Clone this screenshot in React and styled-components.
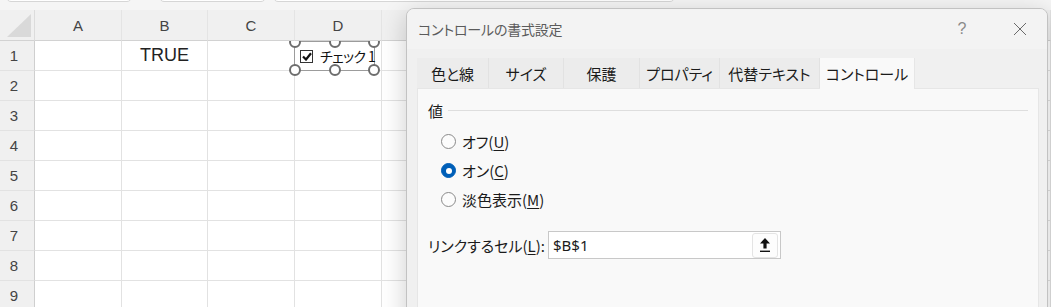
import React from "react";
import styled, { createGlobalStyle } from "styled-components";

const GlobalStyle = createGlobalStyle`
  html, body {
    margin: 0;
    padding: 0;
    background: #fff;
    overflow: hidden;
  }
  body {
    font-family: "Noto Sans", "Noto Sans CJK JP", sans-serif;
  }
`;

const Screen = styled.div`
  position: relative;
  width: 1051px;
  height: 307px;
  overflow: hidden;
  background: #fff;
`;

const TopStrip = styled.div`
  height: 10px;
  background: #f5f5f5;
  display: flex;
  align-items: flex-end;
  overflow: hidden;
`;

const StripBox = styled.div`
  width: ${(p) => p.$w}px;
  margin-left: ${(p) => p.$ml}px;
  height: 14px;
  margin-bottom: 8px;
  flex-shrink: 0;
  background: #fff;
  border: 1px solid #d6d6d6;
  border-radius: 5px;
`;

const Sheet = styled.div`
  display: grid;
  grid-template-columns: 35px 87px 86px 87px 87px 1fr;
  grid-template-rows: 31px repeat(9, 30px);
  font-family: "Liberation Sans", "Noto Sans", sans-serif;
`;

const Corner = styled.div`
  position: relative;
  z-index: 2;
  background: #f0f0f0;
  border-right: 1px solid #dcdcdc;
  border-bottom: 1px solid #d2d2d2;

  &::after {
    content: "";
    position: absolute;
    right: 3px;
    bottom: 3px;
    border-style: solid;
    border-width: 0 0 23px 24px;
    border-color: transparent transparent #d9d9d9 transparent;
  }
`;

const ColHead = styled.div`
  position: relative;
  z-index: 2;
  display: flex;
  align-items: center;
  justify-content: center;
  background: #f0f0f0;
  border-right: 1px solid #e4e4e4;
  border-bottom: 1px solid #d2d2d2;
  color: #444;
  font-size: 15px;
`;

const RowHead = styled.div`
  display: flex;
  align-items: center;
  justify-content: center;
  padding-right: 6px;
  background: #f0f0f0;
  border-right: 1px solid #cfcfcf;
  border-bottom: 1px solid #e2e2e2;
  color: #444;
  font-size: 15px;
`;

const Cell = styled.div`
  position: relative;
  display: flex;
  align-items: center;
  justify-content: center;
  border-right: 1px solid #e2e2e2;
  border-bottom: 1px solid #e2e2e2;
  color: #222;
  font-size: 18px;
`;

const FormControl = styled.div`
  position: absolute;
  left: -1px;
  top: 0;
  width: 81px;
  height: 30px;
  box-sizing: border-box;
  z-index: 1;
  display: flex;
  align-items: center;
  gap: 7px;
  padding-left: 5px;
  border: 1px solid #9c9c9c;
  background: #fff;
  font-family: "Noto Sans CJK JP", sans-serif;
  font-feature-settings: "palt";
  font-size: 14px;
  letter-spacing: -0.6px;
  color: #111;
  white-space: nowrap;
`;

const MiniCheck = styled.span`
  width: 13px;
  height: 13px;
  box-sizing: border-box;
  border: 1px solid #333;
  background: #fff;
  display: flex;
  align-items: center;
  justify-content: center;
  flex-shrink: 0;
`;

const Handle = styled.span`
  position: absolute;
  left: ${(p) => p.$x};
  top: ${(p) => p.$y};
  width: 12px;
  height: 12px;
  box-sizing: border-box;
  border: 2px solid #6d6d6d;
  border-radius: 50%;
  background: #fff;
  transform: translate(-50%, -50%);
`;

const Dialog = styled.div`
  position: absolute;
  left: 406px;
  top: 8px;
  width: 642px;
  height: 330px;
  box-sizing: border-box;
  z-index: 5;
  border: 1px solid #c2c2c2;
  border-radius: 8px 8px 0 0;
  background: #f0f0f0;
  box-shadow: 0 6px 26px rgba(0, 0, 0, 0.2);
  font-family: "Noto Sans CJK JP", sans-serif;
  font-feature-settings: "palt";
  overflow: hidden;
`;

const TitleBar = styled.div`
  height: 40px;
  display: flex;
  align-items: center;
  gap: 12px;
  padding: 0 4px 0 11px;
  background: #f3f3f3;
`;

const Title = styled.div`
  flex: 1;
  font-size: 14px;
  color: #5b5b5b;
  letter-spacing: -0.2px;
`;

const TitleButton = styled.div`
  width: 46px;
  height: 32px;
  display: flex;
  align-items: center;
  justify-content: center;
  color: #8a8a8a;
  font-family: "Liberation Sans", sans-serif;
  font-size: 16px;
`;

const Body = styled.div`
  padding: 9px 8px 0 10px;
`;

const Tabs = styled.div`
  display: flex;
  position: relative;
  z-index: 1;
`;

const Tab = styled.div`
  width: ${(p) => p.$w}px;
  box-sizing: border-box;
  display: flex;
  align-items: center;
  justify-content: center;
  font-size: 15px;
  color: #1b1b1b;
  background: ${(p) => (p.$active ? "#f9f9f9" : "#ececec")};
  border-right: 1px solid ${(p) => (p.$active ? "#e6e6e6" : "#e2e2e2")};
  margin-bottom: ${(p) => (p.$active ? "-1px" : "0")};
  height: ${(p) => (p.$active ? "31px" : "30px")};
`;

const Panel = styled.div`
  height: 260px;
  box-sizing: border-box;
  padding: 11px 10px 0 10px;
  background: #f9f9f9;
  border: 1px solid #e6e6e6;
`;

const GroupHead = styled.div`
  height: 20px;
  display: flex;
  align-items: center;
  font-size: 15px;
  color: #1b1b1b;
`;

const GroupLine = styled.div`
  flex: 1;
  height: 1px;
  margin-left: 5px;
  background: #dedede;
`;

const RadioList = styled.div`
  margin-top: 7px;
  padding-left: 13px;
`;

const RadioRow = styled.div`
  height: 29px;
  display: flex;
  align-items: center;
  gap: 6px;
  font-size: 15px;
  color: #1b1b1b;
`;

const RadioDot = styled.span`
  width: 15px;
  height: 15px;
  box-sizing: border-box;
  border-radius: 50%;
  border: 1px solid ${(p) => (p.$on ? "#005fb8" : "#8a8a8a")};
  background: ${(p) => (p.$on ? "#005fb8" : "#fcfcfc")};
  display: flex;
  align-items: center;
  justify-content: center;

  &::after {
    content: "";
    display: ${(p) => (p.$on ? "block" : "none")};
    width: 6px;
    height: 6px;
    border-radius: 50%;
    background: #fff;
  }
`;

const LinkRow = styled.div`
  margin-top: 17px;
  display: flex;
  align-items: center;
`;

const LinkLabel = styled.div`
  width: 120px;
  font-size: 15px;
  color: #1b1b1b;
`;

const RefInput = styled.div`
  width: 233px;
  height: 28px;
  box-sizing: border-box;
  display: flex;
  align-items: center;
  padding: 1px 2px 1px 4px;
  background: #fff;
  border: 1px solid #c8c8c8;
`;

const RefText = styled.div`
  flex: 1;
  font-family: "Noto Sans", sans-serif;
  font-size: 15px;
  color: #1b1b1b;
`;

const RefButton = styled.div`
  width: 26px;
  height: 25px;
  box-sizing: border-box;
  display: flex;
  align-items: center;
  justify-content: center;
  background: #fdfdfd;
  border: 1px solid #e4e4e4;
  border-radius: 3px;
`;

const Key = styled.u`
  text-underline-offset: 2px;
`;

const columns = ["A", "B", "C", "D", ""];
const tabs = [
  { label: "色と線", w: 72 },
  { label: "サイズ", w: 75 },
  { label: "保護", w: 76 },
  { label: "プロパティ", w: 80 },
  { label: "代替テキスト", w: 100 },
  { label: "コントロール", w: 95, active: true },
];

const CheckMark = () => (
  <svg width="10" height="9" viewBox="0 0 10 9">
    <path d="M1 4.5 L4 7.5 L9 1.2" fill="none" stroke="#111" strokeWidth="2.2" />
  </svg>
);

const UpArrow = () => (
  <svg width="12" height="16" viewBox="0 0 12 16">
    <path d="M6 1 L11 6.5 H7.6 V11.5 H4.4 V6.5 H1 Z" fill="#111" />
    <rect x="1" y="13.6" width="10" height="1.4" fill="#111" />
  </svg>
);

const CloseIcon = () => (
  <svg width="14" height="14" viewBox="0 0 14 14">
    <path d="M1 1 L13 13 M13 1 L1 13" stroke="#6a6a6a" strokeWidth="1" />
  </svg>
);

const renderCell = (row, col) => {
  if (row === 1 && col === 1) return "TRUE";
  if (row === 1 && col === 3) {
    return (
      <FormControl>
        <MiniCheck>
          <CheckMark />
        </MiniCheck>
        <span>チェック&nbsp;1</span>
        <Handle $x="0%" $y="0%" />
        <Handle $x="50%" $y="0%" />
        <Handle $x="100%" $y="0%" />
        <Handle $x="0%" $y="100%" />
        <Handle $x="50%" $y="100%" />
        <Handle $x="100%" $y="100%" />
      </FormControl>
    );
  }
  return null;
};

const App = () => {
  const rows = [1, 2, 3, 4, 5, 6, 7, 8, 9];

  return (
    <Screen>
      <GlobalStyle />
      <TopStrip>
        <StripBox $ml={6} $w={124} />
        <StripBox $ml={27} $w={105} />
        <StripBox $ml={7} $w={400} />
      </TopStrip>

      <Sheet>
        <Corner />
        {columns.map((c, i) => (
          <ColHead key={i}>{c}</ColHead>
        ))}
        {rows.map((r) => (
          <React.Fragment key={r}>
            <RowHead>{r}</RowHead>
            {columns.map((c, i) => (
              <Cell key={i}>{renderCell(r, i)}</Cell>
            ))}
          </React.Fragment>
        ))}
      </Sheet>

      <Dialog>
        <TitleBar>
          <Title>コントロールの書式設定</Title>
          <TitleButton>?</TitleButton>
          <TitleButton>
            <CloseIcon />
          </TitleButton>
        </TitleBar>
        <Body>
          <Tabs>
            {tabs.map((t) => (
              <Tab key={t.label} $w={t.w} $active={t.active}>
                {t.label}
              </Tab>
            ))}
          </Tabs>
          <Panel>
            <GroupHead>
              値
              <GroupLine />
            </GroupHead>
            <RadioList>
              <RadioRow>
                <RadioDot />
                <span>
                  オフ(<Key>U</Key>)
                </span>
              </RadioRow>
              <RadioRow>
                <RadioDot $on />
                <span>
                  オン(<Key>C</Key>)
                </span>
              </RadioRow>
              <RadioRow>
                <RadioDot />
                <span>
                  淡色表示(<Key>M</Key>)
                </span>
              </RadioRow>
            </RadioList>
            <LinkRow>
              <LinkLabel>
                リンクするセル(<Key>L</Key>):
              </LinkLabel>
              <RefInput>
                <RefText>$B$1</RefText>
                <RefButton>
                  <UpArrow />
                </RefButton>
              </RefInput>
            </LinkRow>
          </Panel>
        </Body>
      </Dialog>
    </Screen>
  );
};

export default App;
